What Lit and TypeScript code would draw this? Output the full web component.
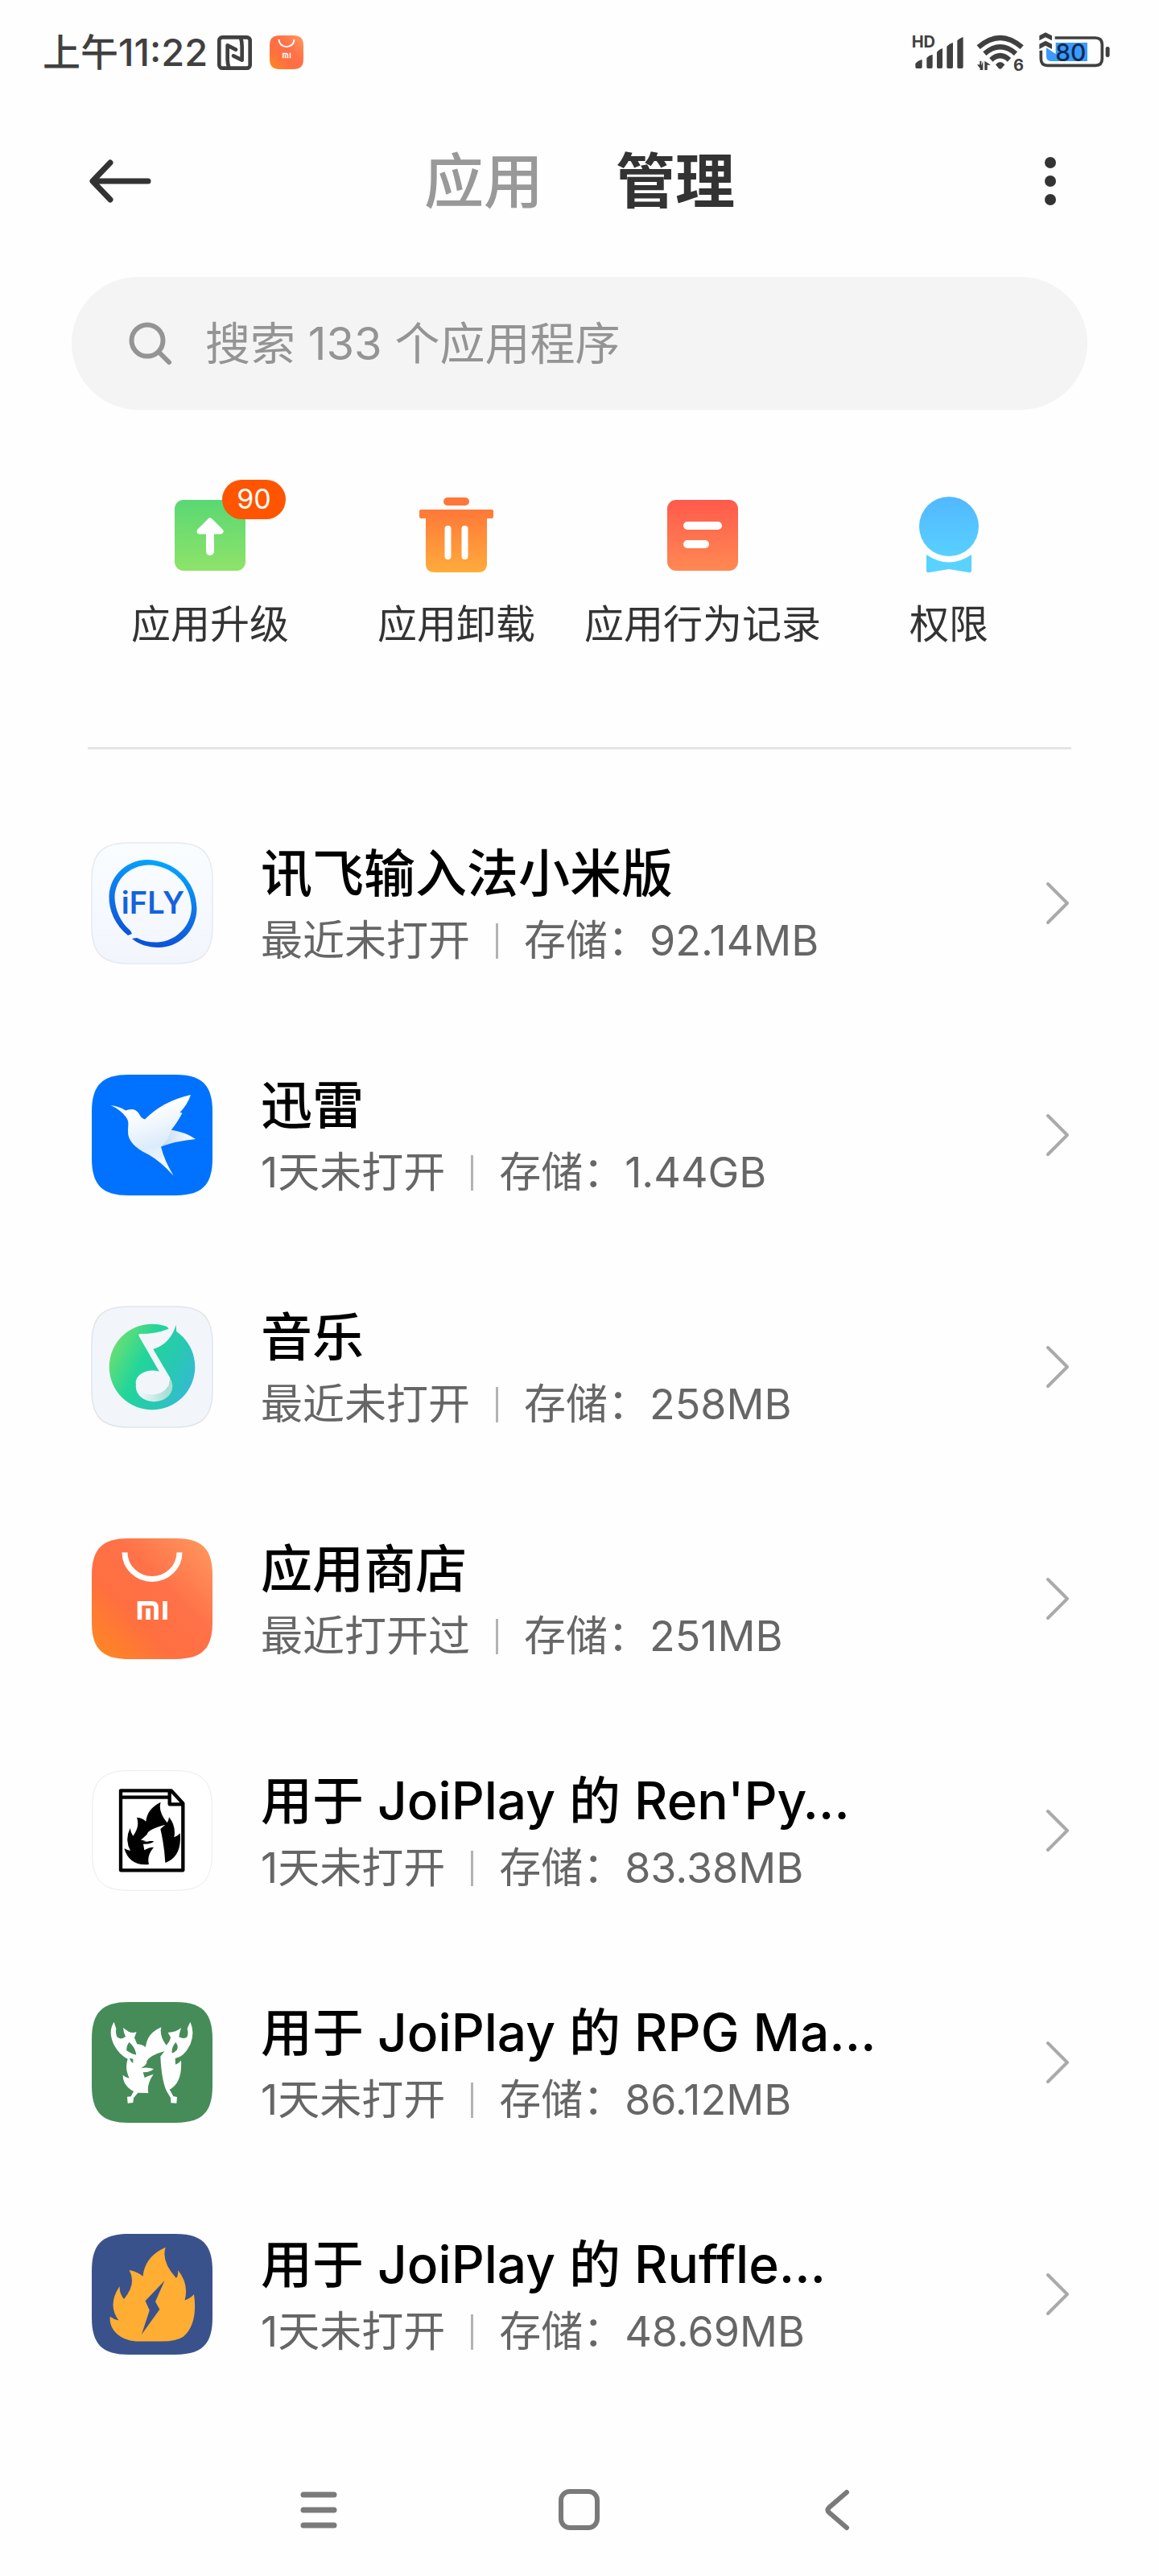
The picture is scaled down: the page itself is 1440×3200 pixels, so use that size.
import { LitElement, html, svg, css, TemplateResult } from "lit";
import { customElement, property } from "lit/decorators.js";

const SQUIRCLE =
  "M46 0H104C137 0 150 13 150 46V104C150 137 137 150 104 150H46C13 150 0 137 0 104V46C0 13 13 0 46 0Z";

const storeArt = svg`
  <defs>
    <linearGradient id="store" x1="0" y1="1" x2="1" y2="0">
      <stop offset="0" stop-color="#ff8a1e" />
      <stop offset=".35" stop-color="#ff6f40" />
      <stop offset=".6" stop-color="#ff7148" />
      <stop offset="1" stop-color="#ff9a60" />
    </linearGradient>
  </defs>
  <path d=${SQUIRCLE} fill="url(#store)" />
  <path d="M41 17.5A34 33 0 0 0 109 17.5" fill="none" stroke="#fff" stroke-width="7" />
  <path d="M59.5 101V80.8H75Q80 80.8 80 86V101M70 87V101M91 78V101" fill="none" stroke="#fff" stroke-width="5.6" />`;

const appIcon = (art: TemplateResult) =>
  html`<svg class="app-icon" viewBox="0 0 150 150" aria-hidden="true">${art}</svg>`;

const iflyIcon = appIcon(svg`
  <defs>
    <linearGradient id="ifly-bg" x1="0" y1="0" x2="0" y2="1">
      <stop offset="0" stop-color="#f9fdff" />
      <stop offset="1" stop-color="#f3f5fd" />
    </linearGradient>
    <linearGradient id="ifly" x1=".7" y1="0" x2=".45" y2="1">
      <stop offset="0" stop-color="#00aaff" />
      <stop offset=".5" stop-color="#1274ea" />
      <stop offset="1" stop-color="#0a50d6" />
    </linearGradient>
  </defs>
  <path d=${SQUIRCLE} fill="url(#ifly-bg)" />
  <path d=${SQUIRCLE} fill="none" stroke="#e6e9ee" stroke-width="1.5" />
  <path d="M50 113L45 115C29 102 21 84 21.500 66C23 38 46 20.500 70 21C101 22 130 46 130.500 82C130 110 108 130 83 130C70 130 58 126 50 119L56 118C64 122 73 124 82 123.500C105 122 124 103 124 80C123 50 99 28 71 27.500C48 28 29 44 28.500 68C29 84 36 99 48 109Z" fill="url(#ifly)" />
  <text x="76" y="88" text-anchor="middle" class="ifly-text">iFLY</text>`);

const xunleiIcon = appIcon(svg`
  <defs>
    <linearGradient id="bird" x1=".3" y1="0" x2=".6" y2="1">
      <stop offset=".2" stop-color="#ffffff" />
      <stop offset=".65" stop-color="#dcebfb" />
      <stop offset="1" stop-color="#ffffff" />
    </linearGradient>
    <linearGradient id="bird-wing" x1="0" y1="0" x2="1" y2="0">
      <stop offset="0" stop-color="#bfd8f3" />
      <stop offset="1" stop-color="#ffffff" />
    </linearGradient>
  </defs>
  <path d=${SQUIRCLE} fill="#0072ff" />
  <path d="M96 68Q116 71 129 80Q106 82 84 90Z" fill="url(#bird-wing)" />
  <path d="M23.500 38Q35 39.500 42 44.500Q53 40 58.500 48Q61 54 66 55.500Q88 33 123 25Q119 37 109.500 47L112.500 47.500Q106 60 98.500 69Q95 82 86 89.500Q90 106 101.500 125.500Q86 108 71 99.500Q44 87 45 70C45 62 47 58 42 52Q35 43 23.500 38Z" fill="url(#bird)" />`);

const musicIcon = appIcon(svg`
  <defs>
    <linearGradient id="music" x1="0" y1=".25" x2="1" y2=".75">
      <stop offset="0" stop-color="#6fe070" />
      <stop offset=".38" stop-color="#22d59a" />
      <stop offset=".7" stop-color="#28c8b2" />
      <stop offset="1" stop-color="#36b8d8" />
    </linearGradient>
    <linearGradient id="note" x1="0" y1="0" x2="1" y2="0">
      <stop offset=".1" stop-color="#f2f7fa" />
      <stop offset=".85" stop-color="#a9dfd6" />
    </linearGradient>
  </defs>
  <path d=${SQUIRCLE} fill="#f2f6fa" />
  <path d=${SQUIRCLE} fill="none" stroke="#e1e5e9" stroke-width="1.5" />
  <circle cx="75" cy="75" r="53.300" fill="url(#music)" />
  <path d="M104.700 22.700L105.300 32.500L100 42L92 42Z" fill="#26cbae" />
  <ellipse cx="77.500" cy="99" rx="22.800" ry="19.300" fill="url(#note)" />
  <path d="M60 34Q80 34 95.500 27.700L93 24L104.700 22.700Q98 46 76.300 53L97.500 89L95 100L84 81L58.700 37Q57.500 34 60 34Z" fill="#f2f6fa" />
  <ellipse cx="75" cy="94.500" rx="20.300" ry="15" fill="#f2f6fa" />`);

const renpyIcon = html`<svg class="app-icon" viewBox="74 86 450 450" aria-hidden="true">
  <path d="M212 88H386C485 88 522 127 522 224V398C522 495 485 534 386 534H212C113 534 76 495 76 398V224C76 127 113 88 212 88Z" fill="#fff" stroke="#ebebeb" stroke-width="3" />
  <path d="M182 162H370L414 210V459H182ZM182 187H364M364 168V213H412" fill="none" stroke="#000" stroke-width="13" stroke-linejoin="round" />
  <path d="M287 437Q215 445 195 378Q208 384 218 386Q196 345 217 302Q219 320 228 331Q254 295 242 262Q263 264 276 277Q280 230 331 205Q320 238 355 282Q361 275 362 261Q389 295 381 336Q396 331 403 321Q411 408 348 431Q345 370 330 305L348 289Q282 307 280 325L257 346Q280 348 306 351Q295 363 266 361L270 384Q285 374 305 373Q278 405 287 437Z" />
  <path d="M264 350Q280 344 306 347L280 352Z" fill="#fff" />
</svg>`;

const rpgIcon = html`<svg class="app-icon" viewBox="74 79 450 450" aria-hidden="true">
  <path d="M212 79H386C485 79 524 118 524 217V391C524 490 485 529 386 529H212C113 529 74 490 74 391V217C74 118 113 79 212 79Z" fill="#468c58" />
  <path d="M157 153C140 180 143 205 155 235Q175 275 208 291Q196 325 214 363Q200 361 190 351Q190 390 230 412L220 431L206 432L208 456L228 454L230 437L246 417L285 418Q278 385 304 348Q285 353 271 361L265 341Q290 342 305 328Q280 320 257 326Q282 312 279 299Q290 278 345 262L330 282Q334 370 353 411L368 436L369 455L390 456L392 433L378 430L364 405Q412 380 407 297Q398 307 386 312L385 289Q420 283 442 235Q459 190 441 153L430 178Q436 202 427 211Q415 218 399 209Q402 190 407 175Q390 191 358 193L368 210Q366 225 352 240Q325 205 333 173Q280 195 275 247Q260 235 243 236L233 212L241 191Q225 195 212 190L191 175Q193 195 200 208Q182 222 168 209Q162 195 165 179ZM213 229Q235 245 240 276Q220 272 204 260Q202 245 213 229ZM387 229Q399 245 391 258Q378 270 373 269Q370 248 387 229ZM214 288L228 291V307Q220 302 214 288Z" fill="#fff" fill-rule="evenodd" />
</svg>`;

const ruffleIcon = appIcon(svg`
  <path d=${SQUIRCLE} fill="#3a528c" />
  <path d="M91.700 16.700Q86 34 105 55Q108 51 107 45Q121 62 115.600 82.500Q123 80 127 75Q132 112 114 127.500Q105 134 84 133.500H55C34 132 21 118 22.800 102.700Q27 106 33.400 107.500Q19 88 34.700 65Q34 74 40 81Q56 62 46.600 45Q57 47 63.500 52.700Q66 28 91.700 16.700Z" fill="#ffad33" />
  <path d="M90.400 58.300L66.500 83.300L71.800 95L61.900 125L84.400 93.700L79 84.300Z" fill="#3a528c" />`);

const storeIcon = appIcon(storeArt);

@customElement("status-bar")
class StatusBar extends LitElement {
  static styles = css`
    :host {
      display: flex;
      align-items: center;
      justify-content: space-between;
      height: 130px;
      padding: 0 60px 0 53px;
      color: #404040;
    }
    .side {
      display: flex;
      align-items: center;
    }
    .side svg {
      overflow: visible;
    }
    .time {
      font-size: 47px;
      font-weight: 500;
      line-height: 56px;
      margin-right: 12px;
    }
    .nfc {
      width: 43px;
      height: 43px;
      margin-right: 22px;
    }
    .store {
      width: 42px;
      height: 42px;
    }
    .signal {
      width: 64px;
      height: 50px;
      margin-right: 15px;
    }
    .wifi {
      width: 60px;
      height: 50px;
      margin-right: 18px;
    }
    .battery {
      width: 89px;
      height: 50px;
    }
    .hd {
      font: 700 60px Inter, sans-serif;
    }
    .six {
      font: 700 60px Inter, sans-serif;
    }
    .level {
      font: 500 90px Inter, sans-serif;
    }
  `;

  render() {
    return html`
      <div class="side">
        <span class="time">上午11:22</span>
        <svg class="nfc" viewBox="807 129 129 129" fill="none" stroke="#404040" stroke-width="14" aria-hidden="true">
          <rect x="814" y="136" width="115" height="115" rx="12" />
          <path d="M851 250Q845 235 845 220V166L876 182M894 138Q899 150 899 170V221L867 205" stroke-linecap="round" stroke-linejoin="round" />
        </svg>
        <svg class="store" viewBox="0 0 150 150" aria-hidden="true">${storeArt}</svg>
      </div>
      <div class="side">
        <svg class="signal" viewBox="162 120 192 150" fill="#404040" role="img" aria-label="信号">
          <text class="hd" x="158" y="178">HD</text>
          <path d="M172 237Q182 225 197 222V250Q197 255 192 255H177Q172 255 172 250ZM214 216Q222 206 236 203V250Q236 255 231 255H219Q214 255 214 250ZM252 194Q260 184 273 180V250Q273 255 268 255H257Q252 255 252 250ZM289 173Q298 163 312 159V250Q312 255 307 255H294Q289 255 289 250ZM328 151Q337 142 350 138V250Q350 255 345 255H333Q328 255 328 250Z" />
        </svg>
        <svg class="wifi" viewBox="399 120 180 150" fill="none" stroke="#404040" stroke-width="19" role="img" aria-label="无线网络">
          <path d="M407 176Q488 106 569 176M430 200Q488 150 546 200M454 223Q488 192 522 223" />
          <path d="M471 241Q488 221 505 241L494 254Q488 260 482 254Z" fill="#404040" stroke="none" />
          <path d="M418 227V261L402 241H412V227ZM424 227V261H412M430 261V227L453 242H440V261Z" fill="#404040" stroke="none" />
          <text class="six" x="537" y="265" fill="#404040" stroke="none">6</text>
        </svg>
        <svg class="battery" viewBox="633 120 267 150" role="img" aria-label="电量">
          <path d="M660 178L695 201V159H813V228H680Q660 228 660 210Z" fill="#3c9aff" />
          <path d="M692 141H843Q868 141 868 166V219Q868 244 843 244H664Q640 244 640 219V188" fill="none" stroke="#404040" stroke-width="11" />
          <path d="M634 133L657 121L681 133V151L657 139L634 151ZM634 164L657 152L681 164V183L657 170L634 183Z" fill="#404040" />
          <rect x="881" y="174" width="15" height="39" rx="7" fill="#404040" />
          <text class="level" x="751" y="228" text-anchor="middle" fill="#0b2c52">80</text>
        </svg>
      </div>
    `;
  }
}

@customElement("quick-action")
class QuickAction extends LitElement {
  static styles = css`
    :host {
      display: flex;
      justify-content: center;
    }
    .action {
      display: flex;
      flex-direction: column;
      align-items: center;
      gap: 34px;
      padding: 0;
      border: 0;
      background: none;
      color: #333;
      font: inherit;
      font-size: 49px;
      line-height: 60px;
      white-space: nowrap;
    }
    .art {
      position: relative;
      display: flex;
    }
    .badge {
      position: absolute;
      left: 63px;
      top: -20px;
      min-width: 79px;
      height: 49px;
      border-radius: 25px;
      background: #ff5500;
      color: #fff;
      font-size: 34px;
      line-height: 48px;
    }
  `;

  @property() label = "";
  @property() badge = "";

  render() {
    return html`
      <button class="action" type="button">
        <span class="art">
          <slot></slot>
          ${this.badge ? html`<span class="badge">${this.badge}</span>` : ""}
        </span>
        <span>${this.label}</span>
      </button>
    `;
  }
}

@customElement("app-item")
class AppItem extends LitElement {
  static styles = css`
    :host {
      display: block;
    }
    .row {
      display: flex;
      align-items: center;
      gap: 60px;
      height: 288px;
      padding: 0 110px 0 114px;
      color: #000;
      text-decoration: none;
    }
    .app-icon {
      flex: none;
      width: 150px;
      height: 150px;
      overflow: visible;
    }
    .ifly-text {
      font: 600 38px Inter, sans-serif;
      fill: #1562de;
    }
    .text {
      flex: 1;
      min-width: 0;
      padding-top: 10px;
    }
    .name {
      font-size: 64px;
      font-weight: 500;
      line-height: 84px;
      white-space: nowrap;
    }
    .meta {
      display: flex;
      align-items: center;
      color: #666;
      font-size: 52px;
      line-height: 84px;
      white-space: nowrap;
    }
    .bar {
      width: 3px;
      height: 44px;
      margin: 0 32px;
      background: #b3b3b3;
    }
    .chevron {
      flex: none;
      width: 32px;
      height: 56px;
    }
  `;

  @property() name = "";
  @property() used = "";
  @property() size = "";
  @property({ attribute: false }) icon: TemplateResult = html``;

  render() {
    return html`
      <a class="row" href="#">
        ${this.icon}
        <div class="text">
          <div class="name">${this.name}</div>
          <div class="meta">
            <span>${this.used}</span>
            <span class="bar"></span>
            <span>存储：${this.size}</span>
          </div>
        </div>
        <svg class="chevron" viewBox="0 0 32 56" fill="none" stroke="#aaa" stroke-width="4" stroke-linecap="round" stroke-linejoin="round" aria-hidden="true">
          <path d="M4 4L28 28L4 52" />
        </svg>
      </a>
    `;
  }
}

const apps = [
  { name: "讯飞输入法小米版", used: "最近未打开", size: "92.14MB", icon: iflyIcon },
  { name: "迅雷", used: "1天未打开", size: "1.44GB", icon: xunleiIcon },
  { name: "音乐", used: "最近未打开", size: "258MB", icon: musicIcon },
  { name: "应用商店", used: "最近打开过", size: "251MB", icon: storeIcon },
  { name: "用于 JoiPlay 的 Ren'Py…", used: "1天未打开", size: "83.38MB", icon: renpyIcon },
  { name: "用于 JoiPlay 的 RPG Ma…", used: "1天未打开", size: "86.12MB", icon: rpgIcon },
  { name: "用于 JoiPlay 的 Ruffle…", used: "1天未打开", size: "48.69MB", icon: ruffleIcon },
];

@customElement("app-root")
class AppRoot extends LitElement {
  static styles = css`
    :host {
      display: flex;
      flex-direction: column;
      min-height: 100vh;
      background: #fefefe;
      font-family: Inter, "Noto Sans CJK SC", sans-serif;
    }
    button {
      padding: 0;
      border: 0;
      background: none;
      font: inherit;
    }
    svg {
      display: block;
    }
    .header {
      display: grid;
      grid-template-columns: 1fr auto 1fr;
      align-items: center;
      height: 190px;
      padding: 0 108px;
    }
    .back svg {
      width: 84px;
      height: 60px;
    }
    .more {
      justify-self: end;
      padding: 0 20px;
    }
    .more svg {
      width: 14px;
      height: 60px;
    }
    .tabs {
      display: flex;
      gap: 90px;
    }
    .tab {
      color: #999;
      font-size: 74px;
      font-weight: 500;
      line-height: 96px;
    }
    .tab.active {
      color: #333;
      font-weight: 700;
    }
    .search {
      display: flex;
      align-items: center;
      gap: 40px;
      height: 165px;
      margin: 24px 89px 0;
      padding: 0 70px;
      border-radius: 83px;
      background: #f4f4f4;
    }
    .search svg {
      flex: none;
      width: 56px;
      height: 56px;
    }
    .search input {
      flex: 1;
      min-width: 0;
      padding: 0;
      border: 0;
      outline: 0;
      background: none;
      color: #333;
      font: inherit;
      font-size: 56px;
      line-height: 80px;
    }
    .search input::placeholder {
      color: #949494;
      opacity: 1;
    }
    .actions {
      display: grid;
      grid-template-columns: repeat(4, 1fr);
      margin: 0 108px;
      padding: 107px 0 122px;
    }
    .glyph {
      width: 96px;
      height: 96px;
    }
    .divider {
      height: 3px;
      margin: 0 109px 47px;
      border: 0;
      background: #e5e5e5;
    }
    .nav {
      display: flex;
      justify-content: center;
      gap: 262px;
      margin-top: auto;
      padding: 40px 0 52px;
    }
    .nav svg {
      width: 60px;
      height: 60px;
    }
  `;

  render() {
    return html`
      <status-bar></status-bar>

      <header class="header">
        <button class="back" type="button" aria-label="返回">
          <svg viewBox="0 0 84 60" fill="none" stroke="#333" stroke-width="7" stroke-linecap="round" stroke-linejoin="round">
            <path d="M29 7L7 30L29 53M8 30H76" />
          </svg>
        </button>
        <div class="tabs" role="tablist">
          <button class="tab" type="button" role="tab" aria-selected="false">应用</button>
          <button class="tab active" type="button" role="tab" aria-selected="true">管理</button>
        </div>
        <button class="more" type="button" aria-label="更多">
          <svg viewBox="0 0 14 60" fill="#333">
            <circle cx="7" cy="7" r="7" />
            <circle cx="7" cy="30" r="7" />
            <circle cx="7" cy="53" r="7" />
          </svg>
        </button>
      </header>

      <label class="search">
        <svg viewBox="0 0 56 56" fill="none" stroke="#949494" stroke-width="6" aria-hidden="true">
          <circle cx="24" cy="24" r="19.500" />
          <path d="M38 38L51 51" stroke-linecap="round" />
        </svg>
        <input type="text" aria-label="搜索应用程序" placeholder="搜索 133 个应用程序" />
      </label>

      <section class="actions">
        <quick-action label="应用升级" badge="90">
          <svg class="glyph" viewBox="0 0 96 96">
            <defs>
              <linearGradient id="up" x1="0" y1="0" x2="0" y2="1">
                <stop offset="0" stop-color="#5ad873" />
                <stop offset="1" stop-color="#8ee369" />
              </linearGradient>
            </defs>
            <rect x="4" y="5" width="88" height="88" rx="11" fill="url(#up)" />
            <path d="M48 31L61 44H35Z" fill="#fff" stroke="#fff" stroke-width="7" stroke-linejoin="round" />
            <path d="M48 40V69" stroke="#fff" stroke-width="10" stroke-linecap="round" />
          </svg>
        </quick-action>
        <quick-action label="应用卸载">
          <svg class="glyph" viewBox="0 0 96 96">
            <defs>
              <linearGradient id="bin" x1="0" y1="0" x2="0" y2="1">
                <stop offset="0" stop-color="#ff7838" />
                <stop offset="1" stop-color="#ffab3c" />
              </linearGradient>
            </defs>
            <rect x="32" y="2" width="32" height="10" rx="5" fill="#ff7638" />
            <path d="M4 17H92Q94 17 94 19V26Q94 28 92 28H86V84Q86 95 75 95H21Q10 95 10 84V28H4Q2 28 2 26V19Q2 17 4 17Z" fill="url(#bin)" />
            <path d="M37.500 41V75M58.500 41V75" stroke="#fff" stroke-width="8" stroke-linecap="round" />
          </svg>
        </quick-action>
        <quick-action label="应用行为记录">
          <svg class="glyph" viewBox="0 0 96 96">
            <defs>
              <linearGradient id="log" x1="0" y1="0" x2="0" y2="1">
                <stop offset="0" stop-color="#ff5a4c" />
                <stop offset="1" stop-color="#ff8953" />
              </linearGradient>
            </defs>
            <rect x="4" y="5" width="88" height="88" rx="11" fill="url(#log)" />
            <path d="M29 37H67M29 60H51" stroke="#fff" stroke-width="10" stroke-linecap="round" />
          </svg>
        </quick-action>
        <quick-action label="权限">
          <svg class="glyph" viewBox="0 0 96 96">
            <defs>
              <linearGradient id="perm" x1="0" y1="0" x2="0" y2="1">
                <stop offset="0" stop-color="#52b8ff" />
                <stop offset="1" stop-color="#58d0ff" />
              </linearGradient>
            </defs>
            <circle cx="48" cy="38" r="37" fill="url(#perm)" />
            <path d="M20 73Q48 92 76 73V93Q76 96 72 95L48 91L24 95Q20 96 20 93Z" fill="#5ad2ff" />
          </svg>
        </quick-action>
      </section>

      <hr class="divider" />

      <main>
        ${apps.map(
          (app) => html`<app-item .name=${app.name} .used=${app.used} .size=${app.size} .icon=${app.icon}></app-item>`,
        )}
      </main>

      <nav class="nav">
        <button type="button" aria-label="最近任务">
          <svg viewBox="0 0 60 60" fill="none" stroke="#7a7a7a" stroke-width="7" stroke-linecap="round">
            <path d="M9 11H47M9 30H47M9 49H47" />
          </svg>
        </button>
        <button type="button" aria-label="主屏幕">
          <svg viewBox="0 0 60 60" fill="none" stroke="#7a7a7a" stroke-width="6">
            <rect x="7" y="7" width="45" height="45" rx="11" />
          </svg>
        </button>
        <button type="button" aria-label="返回上一页">
          <svg viewBox="0 0 60 60" fill="none" stroke="#7a7a7a" stroke-width="6" stroke-linecap="round">
            <path d="M40 8L18 27Q15 30 18 33L40 52" />
          </svg>
        </button>
      </nav>
    `;
  }
}
